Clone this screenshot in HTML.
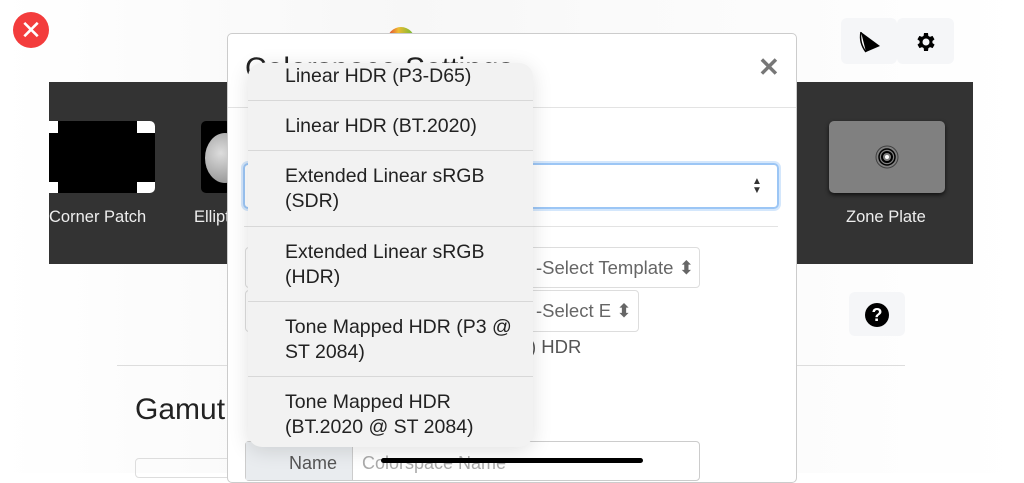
<!DOCTYPE html>
<html><head><meta charset="utf-8"><style>
*{box-sizing:border-box;margin:0;padding:0}
body{width:1024px;height:473px;overflow:hidden;position:relative;font-family:"Liberation Sans",sans-serif;background:#fff}
.abs{position:absolute}
.band{left:49px;top:82px;width:924px;height:182px;background:#333}
.lbl{color:#eee;font-size:16.5px;top:208px}
.menu{left:248px;top:63px;width:285px;height:384px;background:#f2f2f2;border-radius:14px;box-shadow:0 4px 20px rgba(0,0,0,.12);overflow:hidden}
.it{position:absolute;left:0;width:285px;border-top:1px solid #d8d8d8;padding-left:37px;font-size:19.5px;line-height:25px;color:#222}
</style></head><body>
<div class="abs" style="left:0;top:0;width:1024px;height:473px;background:linear-gradient(90deg,#fff,#f7f7f7 40%,#fafafa 60%,#fff)"></div>
<div class="abs" style="left:13px;top:12px;width:36px;height:36px;border-radius:50%;background:#f33c3c;color:#fff;font-size:26px;line-height:36px;text-align:center">✕</div>
<div class="abs" style="left:387px;top:27px;width:28px;height:14px;border-radius:14px 14px 0 0;background:linear-gradient(90deg,#d33,#eb3 40%,#6b3)"></div>
<div class="abs" style="left:841px;top:18px;width:56px;height:46px;background:#f5f6f8;border-radius:6px"></div>
<div class="abs" style="left:897px;top:18px;width:57px;height:46px;background:#f5f6f8;border-radius:6px"></div>
<svg class="abs" style="left:856px;top:29px" width="26" height="26" viewBox="0 0 26 26"><path d="M5 3 L24 17 L10 23 Q4 14 5 3Z" fill="#000"/><path d="M5 3 Q3 14 10 23" stroke="#000" stroke-width="1.5" fill="#fff"/></svg>
<svg class="abs" style="left:914px;top:30px" width="24" height="24" viewBox="0 0 24 24"><path fill="#000" d="M19.4 13a7.5 7.5 0 0 0 0-2l2.1-1.6-2-3.5-2.5 1a7 7 0 0 0-1.7-1L15 3h-4l-.4 2.9a7 7 0 0 0-1.7 1l-2.5-1-2 3.5L6.6 11a7.5 7.5 0 0 0 0 2l-2.1 1.6 2 3.5 2.5-1a7 7 0 0 0 1.7 1L11 21h4l.4-2.9a7 7 0 0 0 1.7-1l2.5 1 2-3.5zM13 15.5a3.5 3.5 0 1 1 0-7 3.5 3.5 0 0 1 0 7z" transform="translate(-1 0)"/></svg>
<div class="abs band"></div>
<div class="abs" style="left:49px;top:121px;width:106px;height:72px;background:#000;border-radius:0 6px 6px 0"></div>
<div class="abs" style="left:49px;top:121px;width:9px;height:12px;background:#fff"></div>
<div class="abs" style="left:49px;top:182px;width:9px;height:11px;background:#fff"></div>
<div class="abs" style="left:137px;top:121px;width:18px;height:12px;background:#fff;border-radius:0 5px 0 0"></div>
<div class="abs" style="left:137px;top:182px;width:18px;height:11px;background:#fff;border-radius:0 0 5px 0"></div>
<div class="abs lbl" style="left:49px">Corner Patch</div>
<div class="abs" style="left:201px;top:121px;width:30px;height:72px;background:#000;border-radius:5px"></div>
<div class="abs" style="left:205px;top:133px;width:40px;height:50px;border-radius:50%;background:radial-gradient(circle at 40% 40%,#ddd,#888)"></div>
<div class="abs lbl" style="left:194px">Ellipt</div>
<div class="abs" style="left:829px;top:121px;width:116px;height:72px;background:#808080;border-radius:5px;box-shadow:0 2px 4px #111"></div>
<svg class="abs" style="left:874px;top:144px" width="26" height="26"><circle cx="13" cy="13" r="11" fill="none" stroke="#000" stroke-width="1" opacity=".5"/><circle cx="13" cy="13" r="8" fill="none" stroke="#000" stroke-width="1.5"/><circle cx="13" cy="13" r="5" fill="none" stroke="#000" stroke-width="2"/><circle cx="13" cy="13" r="2" fill="#fff"/></svg>
<div class="abs lbl" style="left:846px">Zone Plate</div>
<div class="abs" style="left:117px;top:365px;width:788px;height:1px;background:#ddd"></div>
<div class="abs" style="left:135px;top:393px;font-size:30px;color:#222">Gamut</div>
<div class="abs" style="left:135px;top:458px;width:100px;height:20px;border:1px solid #ddd;border-radius:4px"></div>
<div class="abs" style="left:849px;top:292px;width:56px;height:44px;background:#f5f6f8;border-radius:6px"></div>
<div class="abs" style="left:865px;top:303px;width:24px;height:24px;border-radius:50%;background:#000;color:#fff;font-weight:bold;font-size:18px;line-height:24px;text-align:center">?</div>
<div class="abs" style="left:227px;top:33px;width:570px;height:450px;background:#fff;border:1px solid #ccc;border-radius:5px"></div>
<div class="abs" style="left:228px;top:107px;width:568px;height:1px;background:#e3e3e3"></div>
<div class="abs" style="left:245px;top:52px;font-size:30px;color:#222">Colorspace Settings</div>
<div class="abs" style="left:758px;top:52px;font-size:26px;color:#777;font-weight:bold">✕</div>
<div class="abs" style="left:243px;top:163px;width:536px;height:46px;border:2px solid #9cc6f5;border-radius:5px;box-shadow:0 0 0 2px #d4e7fc"></div>
<div class="abs" style="left:752px;top:177px;font-size:10px;line-height:9px;color:#333">▲<br>▼</div>
<div class="abs" style="left:244px;top:226px;width:534px;height:1px;background:#e3e3e3"></div>
<div class="abs" style="left:245px;top:247px;width:455px;height:41px;border:1px solid #ddd;border-radius:4px"></div>
<div class="abs" style="left:536px;top:257px;font-size:18.5px;color:#666">-Select Template ⬍</div>
<div class="abs" style="left:245px;top:290px;width:394px;height:42px;border:1px solid #ddd;border-radius:4px"></div>
<div class="abs" style="left:536px;top:300px;font-size:18.5px;color:#666">-Select E ⬍</div>
<div class="abs" style="left:530px;top:336px;font-size:18.5px;color:#555">) HDR</div>
<div class="abs" style="left:245px;top:441px;width:455px;height:40px;border:1px solid #ccc;border-radius:4px"></div>
<div class="abs" style="left:246px;top:442px;width:107px;height:38px;background:#e9ecef;border-right:1px solid #ccc"></div>
<div class="abs" style="left:289px;top:453px;font-size:18px;color:#555">Name</div>
<div class="abs" style="left:362px;top:453px;font-size:18px;color:#aaa">Colorspace Name</div>
<div class="abs menu">
<div class="it" style="top:0;height:37px;border-top:none;padding-top:1px">Linear HDR (P3-D65)</div>
<div class="it" style="top:37px;height:50px;padding-top:13px">Linear HDR (BT.2020)</div>
<div class="it" style="top:87px;height:76px;padding-top:13px">Extended Linear sRGB<br>(SDR)</div>
<div class="it" style="top:163px;height:75px;padding-top:13px">Extended Linear sRGB<br>(HDR)</div>
<div class="it" style="top:238px;height:75px;padding-top:13px">Tone Mapped HDR (P3 @<br>ST 2084)</div>
<div class="it" style="top:313px;height:75px;padding-top:13px">Tone Mapped HDR<br>(BT.2020 @ ST 2084)</div>
</div>
<div class="abs" style="left:381px;top:458px;width:262px;height:5px;background:#000;border-radius:3px"></div>
</body></html>
